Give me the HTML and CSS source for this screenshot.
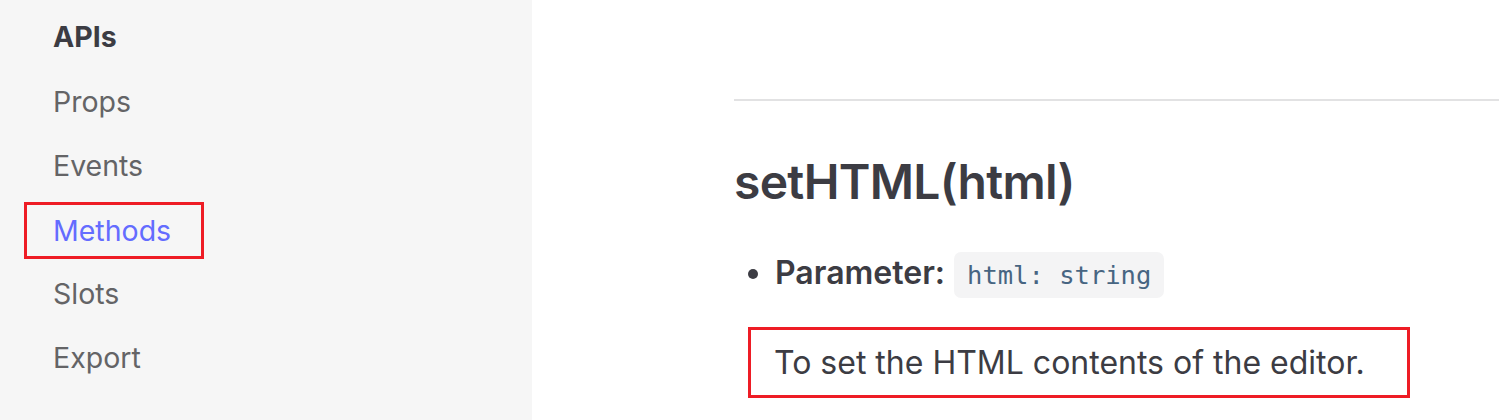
FILE: index.html
```html
<!DOCTYPE html>
<html>
<head>
<meta charset="utf-8">
<link rel="stylesheet" href="styles.css">
</head>
<body>
<div class="layout">
  <aside class="sidebar">
    <div class="group-title">APIs</div>
    <ul class="nav">
      <li class="nav-item"><span class="link">Props</span></li>
      <li class="nav-item"><span class="link">Events</span></li>
      <li class="nav-item"><span class="link active marked">Methods</span></li>
      <li class="nav-item"><span class="link">Slots</span></li>
      <li class="nav-item"><span class="link">Export</span></li>
    </ul>
  </aside>
  <main class="content">
    <hr class="divider">
    <h2 class="title">setHTML(html)</h2>
    <ul class="params">
      <li><strong>Parameter:</strong> <code class="code">html: string</code></li>
    </ul>
    <p class="desc"><span class="marked-p">To set the HTML contents of the editor.</span></p>
  </main>
</div>
</body>
</html>
```
FILE: styles.css
```css
html, body {
  margin: 0;
  padding: 0;
  background: #ffffff;
}
body {
  font-family: Inter, "Noto Sans", sans-serif;
  width: 1499px;
  height: 420px;
  overflow: hidden;
}
.layout {
  display: flex;
  height: 420px;
}
.sidebar {
  width: 532px;
  flex: none;
  background: #f6f6f6;
  padding-top: 6px;
  box-sizing: border-box;
}
.group-title {
  height: 64px;
  line-height: 62px;
  padding-left: 53px;
  font-size: 28.5px;
  font-weight: 700;
  color: #3c3c43;
}
.nav {
  list-style: none;
  margin: 0;
  padding: 0;
}
.nav-item {
  height: 64px;
  display: flex;
  align-items: center;
}
.link {
  padding-left: 53px;
  font-size: 28.5px;
  color: #646466;
  line-height: 32px;
}
.link.active {
  color: #646cff;
}
.link.marked {
  margin-left: 24px;
  padding-left: 26px;
  width: 148px;
  height: 51px;
  line-height: 51px;
  border: 3px solid #ee1c25;
}
.content {
  flex: 1;
  padding-left: 202px;
  padding-top: 99px;
}
.divider {
  margin: 0;
  border: 0;
  border-top: 2px solid #e2e2e3;
}
.title {
  margin: 49px 0 0;
  font-size: 48px;
  font-weight: 600;
  line-height: 64px;
  color: #3c3c43;
  letter-spacing: -0.7px;
}
.params {
  margin: 36px 0 0;
  padding-left: 41px;
  font-size: 32px;
  color: #3c3c43;
  line-height: 46px;
}
.params strong {
  font-weight: 600;
}
.code {
  font-family: "DejaVu Sans Mono", monospace;
  font-size: 25.5px;
  color: #476582;
  background: #f4f4f5;
  border-radius: 7px;
  padding: 8px 13px;
}
.desc {
  margin: 29px 0 0 14px;
  font-size: 32px;
  color: #3c3c43;
}
.marked-p {
  display: block;
  width: fit-content;
  border: 3px solid #ee1c25;
  padding: 0 42px 0 23px;
  height: 65px;
  line-height: 65px;
}
```
